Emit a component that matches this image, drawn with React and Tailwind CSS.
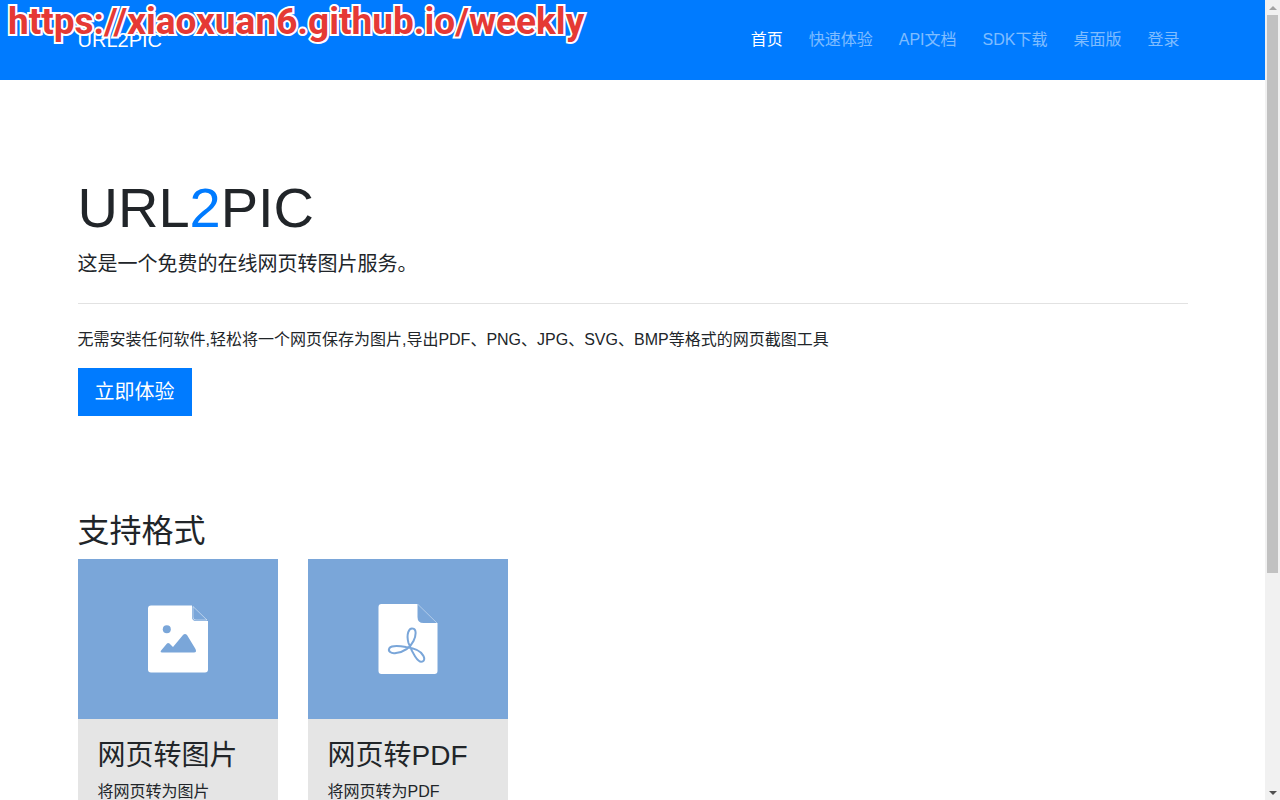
import React from "react";

const sans = "font-['Liberation_Sans','Noto_Sans_CJK_SC',sans-serif]";

const navLinks = ["首页", "快速体验", "API文档", "SDK下载", "桌面版", "登录"];

const ImageIcon = () => (
  <svg viewBox="-2 -1 100 100" className="w-[100px] h-[100px]">
    <path d="M21 15.500H62V27Q62 31 66 31H78V79.500Q78 82.500 75 82.500H21Q18 82.500 18 79.500V18.500Q18 15.500 21 15.500Z" fill="#fff" />
    <path d="M63 16.500L77 30H66Q63 30 63 27Z" fill="none" stroke="#fff" strokeOpacity="0.6" strokeWidth="0.8" />
    <circle cx="36.800" cy="39.200" r="4" fill="#7aa6d9" />
    <path d="M32 62.500Q29.500 62.500 31.500 60L37 53.500Q38 52.500 39.500 53.500L43 57L53 45Q55 43 57 45L65.500 59Q67 62.500 64 62.500Z" fill="#7aa6d9" />
  </svg>
);

const PdfIcon = () => (
  <svg viewBox="-2 -1 100 100" className="w-[100px] h-[100px]">
    <path d="M21.500 14H57.500V27Q57.500 33 63.500 33H77.500V81Q77.500 84 74.500 84H21.500Q18.500 84 18.500 81V17Q18.500 14 21.500 14Z" fill="#fff" />
    <path d="M58 14.500L77 33" stroke="#fff" strokeOpacity="0.5" strokeWidth="0.8" fill="none" />
    <path
      d="M62.500 71.500C58 74 52 62 48.500 53C46 44 49 38 52.500 38.500C57 39 56 46 53.500 51C50 58 44 62 36 63C31 64 27.500 61 29.500 58C32 55 40 56 46 57C53 58 61 60 63.500 66C65 69 64 71 62.500 71.500Z"
      fill="none"
      stroke="#7aa6d9"
      strokeWidth="2"
    />
  </svg>
);

const formats = [
  { title: "网页转图片", desc: "将网页转为图片", icon: <ImageIcon /> },
  { title: "网页转PDF", desc: "将网页转为PDF", icon: <PdfIcon /> },
];

// the reference shows the browser's classic scrollbar, drawn here as a strip
const Scrollbar = () => (
  <div className="w-[15px] shrink-0 bg-[#f1f1f1] flex flex-col items-center">
    <div className="h-[15px] flex items-center justify-center">
      <div className="w-0 h-0 border-x-[4px] border-x-transparent border-b-[4px] border-b-[#a3a3a3]" />
    </div>
    <div className="w-[11px] h-[558px] bg-[#c1c1c1]" />
    <div className="flex-1" />
    <div className="h-[15px] flex items-center justify-center">
      <div className="w-0 h-0 border-x-[4px] border-x-transparent border-t-[4px] border-t-[#505050]" />
    </div>
  </div>
);

export default function App() {
  return (
    <div className={`${sans} h-screen flex overflow-hidden bg-white text-[#212529] relative`}>
      {/* watermark over the nav */}
      <div className="absolute left-2 top-0 z-10 font-['Roboto',sans-serif] font-bold text-[37px] leading-[44px] text-[#e53935] [-webkit-text-stroke:4px_#fff] [paint-order:stroke_fill] whitespace-nowrap">
        https://xiaoxuan6.github.io/weekly
      </div>

      <div className="flex-1 min-w-0 overflow-hidden">
        <nav className="bg-[#007bff] h-20">
          <div className="w-[1110px] mx-auto h-full flex items-center justify-between">
            <span className="text-white text-xl">URL2PIC</span>
            <ul className="flex gap-2.5">
              {navLinks.map((link, i) => (
                <li key={link} className={`px-2 text-base ${i === 0 ? "text-white" : "text-white/50"}`}>
                  {link}
                </li>
              ))}
            </ul>
          </div>
        </nav>

        <main className="w-[1110px] mx-auto">
          <section className="pt-[94px]">
            <h1 className="text-[56px] leading-[67px]">
              URL<span className="text-[#007bff]">2</span>PIC
            </h1>
            <p className="text-xl leading-[30px] mt-2">这是一个免费的在线网页转图片服务。</p>
            <hr className="border-[#e2e2e2] mt-6" />
            <p className="text-base leading-6 mt-6">
              无需安装任何软件,轻松将一个网页保存为图片,导出PDF、PNG、JPG、SVG、BMP等格式的网页截图工具
            </p>
            <button className="bg-[#007bff] text-white text-xl leading-[30px] px-[17px] py-[9px] mt-4">立即体验</button>
          </section>

          <section className="mt-24">
            <h2 className="text-[32px] leading-[38px]">支持格式</h2>
            <div className="flex gap-[30px] mt-[9px]">
              {formats.map((f) => (
                <div key={f.title} className="w-[200px] bg-[#e5e5e5]">
                  <div className="h-40 bg-[#7aa6d9] flex items-center justify-center">{f.icon}</div>
                  <div className="px-5 pt-5 pb-10">
                    <h3 className="text-[28px] leading-[34px]">{f.title}</h3>
                    <p className="text-base leading-6 mt-[7px]">{f.desc}</p>
                  </div>
                </div>
              ))}
            </div>
          </section>
        </main>
      </div>

      <Scrollbar />
    </div>
  );
}
